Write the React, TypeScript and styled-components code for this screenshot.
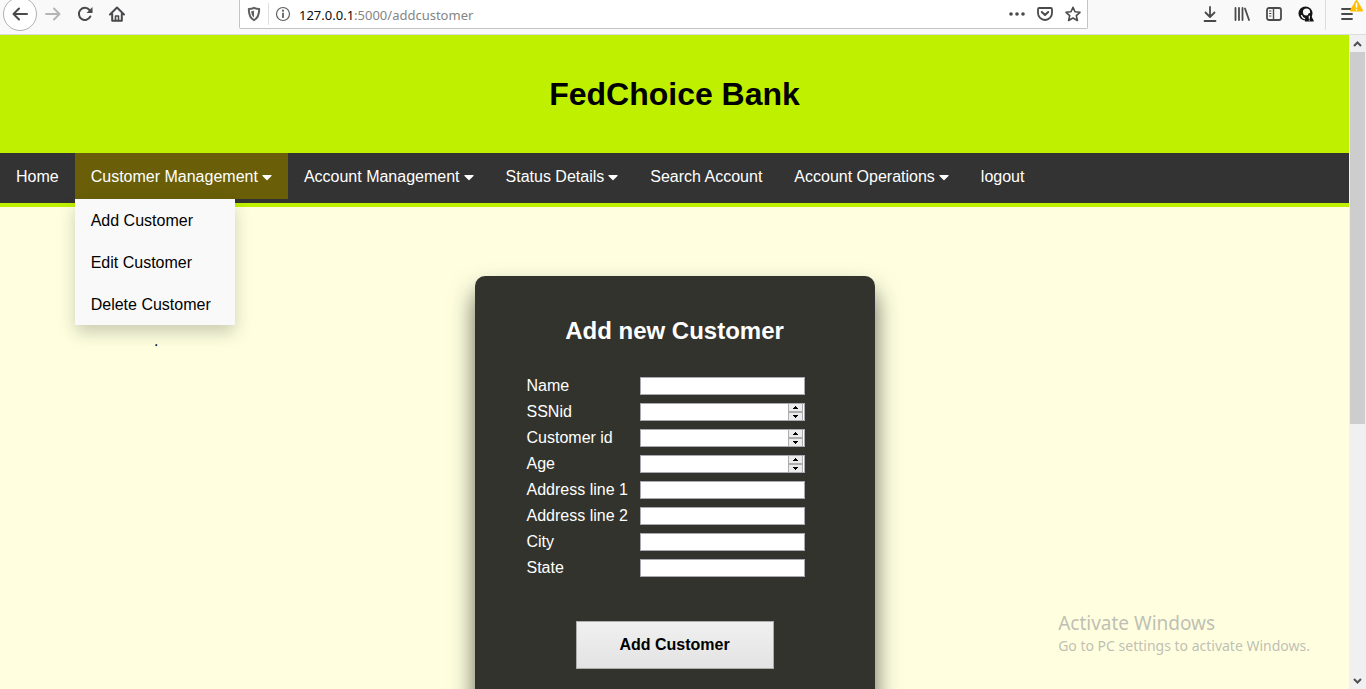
import React from "react";
import styled, { createGlobalStyle } from "styled-components";
import { FaCaretDown } from "react-icons/fa";

const GlobalStyle = createGlobalStyle`
  *, *::before, *::after { box-sizing: border-box; }
  html, body { margin: 0; padding: 0; }
  body { font-family: "Liberation Sans", Arial, sans-serif; font-size: 16px; line-height: 18px; }
  button, input { font: inherit; margin: 0; padding: 0; border-radius: 0; }
`;

const Browser = styled.div`
  display: flex;
  flex-direction: column;
  height: 100vh;
  overflow: hidden;
`;

const Toolbar = styled.header`
  flex: none;
  display: flex;
  align-items: flex-start;
  height: 35px;
  background: #f9f9fa;
  border-bottom: 1px solid #dcdcdc;
`;

const ToolGroup = styled.div<{ $side: "left" | "right" }>`
  flex: none;
  display: flex;
  align-items: center;
  gap: 16px;
  height: 28px;
  width: ${(p) => (p.$side === "left" ? "239px" : "278px")};
  padding: ${(p) => (p.$side === "left" ? "0 0 0 3px" : "0 10px 0 0")};
  justify-content: ${(p) => (p.$side === "left" ? "flex-start" : "flex-end")};
`;

const ToolButton = styled.button<{ $round?: boolean; $dim?: boolean }>`
  position: relative;
  flex: none;
  display: flex;
  align-items: center;
  justify-content: center;
  width: ${(p) => (p.$round ? "34px" : "16px")};
  height: ${(p) => (p.$round ? "34px" : "16px")};
  margin-right: ${(p) => (p.$round ? "-8px" : "0")};
  border: ${(p) => (p.$round ? "1px solid #b1b1b3" : "0")};
  border-radius: ${(p) => (p.$round ? "50%" : "0")};
  background: ${(p) => (p.$round ? "#fff" : "transparent")};
  color: ${(p) => (p.$dim ? "#b5b5b6" : "#4a4a4c")};
`;

const ToolDivider = styled.span`
  width: 1px;
  height: 32px;
  margin: 0 -2px 0 -5px;
  background: #dcdcdd;
`;

const UpdateBadge = styled.svg`
  position: absolute;
  top: -7px;
  left: 10px;
`;

const AddressBar = styled.div`
  flex: 1;
  min-width: 0;
  display: flex;
  align-items: center;
  gap: 12px;
  height: 29px;
  padding: 0 6px;
  background: #fff;
  border: 1px solid #c4c4c4;
  border-top: 0;
  border-radius: 0 0 2px 2px;
`;

const SiteIdentity = styled.div`
  display: flex;
  align-items: center;
  gap: 6px;
  color: #606062;
`;

const IdentityDivider = styled.span`
  width: 1px;
  height: 22px;
  background: #dfdfdf;
`;

const Url = styled.div`
  flex: 1;
  margin-left: -4px;
  padding-top: 2px;
  font-family: "Noto Sans", "Open Sans", sans-serif;
  font-size: 13px;
  color: #858585;
`;

const UrlHost = styled.span`
  color: #0c0c0d;
`;

const Viewport = styled.div`
  flex: 1;
  min-height: 0;
  display: flex;
`;

const Page = styled.div`
  position: relative;
  flex: 1;
  min-width: 0;
  overflow: hidden;
  background: #ffffe0;
`;

const Banner = styled.div`
  padding: 40px;
  background: #bff000;
  text-align: center;
`;

const BankName = styled.h1`
  margin: 0;
  font-size: 32px;
  line-height: 38px;
  color: #000;
`;

const NavBar = styled.nav`
  display: flex;
  height: 54px;
  background: #333;
  border-bottom: 4px solid #bff000;
`;

const NavEntry = styled.div`
  position: relative;
`;

const NavLink = styled.a`
  display: block;
  padding: 15px 16px 13px;
  color: #fff;
  text-decoration: none;
  white-space: nowrap;
`;

const NavToggle = styled.button<{ $open?: boolean }>`
  display: flex;
  align-items: center;
  gap: 4px;
  height: 46px;
  padding: 2px 16px 0;
  border: 0;
  background: ${(p) => (p.$open ? "#6a5f08" : "transparent")};
  color: #fff;
  white-space: nowrap;
`;

const Menu = styled.div`
  position: absolute;
  top: 46px;
  left: 0;
  z-index: 1;
  min-width: 160px;
  background: #f9f9f9;
  box-shadow: 0 8px 16px rgba(0, 0, 0, 0.2);
`;

const MenuLink = styled.a`
  display: block;
  padding: 13px 16px 11px;
  color: #000;
  text-decoration: none;
`;

const Content = styled.main`
  display: grid;
  grid-template-columns: 1fr 400px 1fr;
  align-items: start;
`;

const SideNote = styled.p`
  margin: 0;
  padding: 125px 0 0 154px;
  color: #000;
`;

const Card = styled.form`
  margin-top: 69px;
  padding: 40px;
  background: #33332d;
  border-radius: 10px;
  box-shadow: 0 15px 25px rgba(0, 0, 0, 0.6);
  color: #fff;
  text-align: center;
`;

const CardTitle = styled.h2`
  margin: 0 0 28px;
  font-size: 24px;
  line-height: 30px;
`;

const Fields = styled.div`
  display: grid;
  grid-template-columns: 113px 165px;
  padding-left: 12px;
`;

const FieldLabel = styled.label`
  height: 26px;
  line-height: 24px;
  text-align: left;
`;

const FieldBox = styled.div`
  display: flex;
  height: 18px;
  margin-top: 3px;
  background: #fff;
  border: 1px solid #a9a9b1;
`;

const FieldInput = styled.input`
  flex: 1;
  min-width: 0;
  height: 16px;
  border: 0;
  outline: 0;
  background: transparent;
  font-size: 13px;
  appearance: textfield;
  &::-webkit-inner-spin-button, &::-webkit-outer-spin-button { appearance: none; margin: 0; }
`;

const Stepper = styled.div`
  display: flex;
  flex-direction: column;
  justify-content: space-between;
  width: 15px;
  border: solid #adadad;
  border-width: 0 1px;
  margin-right: 1px;
  background: #adadad;
`;

const StepButton = styled.button`
  display: flex;
  align-items: center;
  justify-content: center;
  height: 7px;
  border: 0;
  background: #ececec;
`;

const SubmitButton = styled.button`
  width: 198px;
  height: 48px;
  margin-top: 39px;
  border: 1px solid #adadad;
  background: linear-gradient(#f0f0f0, #e3e3e3);
  color: #000;
  font-weight: bold;
`;

const Watermark = styled.div`
  position: absolute;
  right: 39px;
  bottom: 33px;
  font-family: "Noto Sans", "Open Sans", sans-serif;
  color: #bfbfb4;
  pointer-events: none;
`;

const WatermarkTitle = styled.div`
  font-size: 19px;
  line-height: 26px;
`;

const WatermarkText = styled.div`
  font-size: 14px;
  line-height: 20px;
`;

const ScrollBar = styled.div`
  flex: none;
  display: flex;
  flex-direction: column;
  width: 17px;
  padding: 0 1px;
  background: #f0f0f0;
`;

const ScrollArrow = styled.button`
  display: flex;
  align-items: center;
  justify-content: center;
  height: 17px;
  border: 0;
  background: transparent;
  color: #505050;
`;

const ScrollTrack = styled.div`
  flex: 1;
`;

const ScrollThumb = styled.div`
  height: 60%;
  background: #cdcdcd;
`;

const Icon = ({ children }: { children: React.ReactNode }) => (
  <svg
    width="16"
    height="16"
    viewBox="0 0 16 16"
    fill="none"
    stroke="currentColor"
    strokeWidth="2"
    strokeLinecap="round"
    strokeLinejoin="round"
    aria-hidden="true"
  >
    {children}
  </svg>
);

const customerLinks = ["Add Customer", "Edit Customer", "Delete Customer"];

const navItems: { label: string; menu?: boolean; items?: string[] }[] = [
  { label: "Home" },
  { label: "Customer Management", menu: true, items: customerLinks },
  { label: "Account Management", menu: true },
  { label: "Status Details", menu: true },
  { label: "Search Account" },
  { label: "Account Operations", menu: true },
  { label: "logout" },
];

const fields = [
  { id: "name", label: "Name" },
  { id: "ssn", label: "SSNid", numeric: true },
  { id: "customer", label: "Customer id", numeric: true },
  { id: "age", label: "Age", numeric: true },
  { id: "address1", label: "Address line 1" },
  { id: "address2", label: "Address line 2" },
  { id: "city", label: "City" },
  { id: "state", label: "State" },
];

function BrowserToolbar() {
  return (
    <Toolbar>
      <ToolGroup $side="left">
        <ToolButton $round aria-label="Back">
          <Icon><path d="M15 8H1.500M7 2.500 1.500 8 7 13.500" /></Icon>
        </ToolButton>
        <ToolButton $dim aria-label="Forward">
          <Icon><path d="M1 8h13.500M9 2.500 14.500 8 9 13.500" /></Icon>
        </ToolButton>
        <ToolButton aria-label="Reload">
          <Icon>
            <path d="M13.300 10.500A6 6 0 1 1 12.500 4" />
            <path d="M15.500 1v6h-6z" fill="currentColor" stroke="none" />
          </Icon>
        </ToolButton>
        <ToolButton aria-label="Home">
          <Icon>
            <path d="M1 8.500 8 1.500l7 7M3.200 8v6.800h9.600V8" />
            <path d="M6.500 14.500V10h3v4.500" strokeWidth="1.600" />
          </Icon>
        </ToolButton>
      </ToolGroup>

      <AddressBar>
        <SiteIdentity>
          <Icon>
            <path d="M8 1.800c1.700.9 3.600 1.200 5.200 1.200 0 4.500-.4 8.700-5.200 11.200C3.200 11.700 2.800 7.500 2.800 3 4.400 3 6.300 2.700 8 1.800z" />
            <path d="M8 4.500v7C5.900 9.800 5.300 7.800 5.200 5.200 6.200 5.100 7.200 4.900 8 4.500z" fill="currentColor" stroke="none" />
          </Icon>
          <IdentityDivider />
          <Icon>
            <circle cx="8" cy="8" r="6.500" strokeWidth="1.200" />
            <path d="M8 7.500v3.700" strokeWidth="1.800" />
            <circle cx="8" cy="4.700" r="1.100" fill="currentColor" stroke="none" />
          </Icon>
        </SiteIdentity>
        <Url role="textbox" aria-label="Address">
          <UrlHost>127.0.0.1</UrlHost>:5000/addcustomer
        </Url>
        <ToolButton aria-label="Page actions">
          <Icon>
            <g fill="currentColor" stroke="none">
              <circle cx="2" cy="8" r="1.800" />
              <circle cx="8" cy="8" r="1.800" />
              <circle cx="14" cy="8" r="1.800" />
            </g>
          </Icon>
        </ToolButton>
        <ToolButton aria-label="Save to Pocket">
          <Icon>
            <path d="M2.200 2h11.600q1.200 0 1.200 1.200V7A7 7 0 0 1 1 7V3.200Q1 2 2.200 2z" strokeWidth="1.800" />
            <path d="m4.800 6 3.200 3 3.200-3" />
          </Icon>
        </ToolButton>
        <ToolButton aria-label="Bookmark">
          <Icon>
            <path d="m8 1.300 2 4.500 5 .5-3.700 3.300 1.100 4.900L8 12l-4.400 2.500 1.100-4.900L1 6.300l5-.5z" strokeWidth="1.600" />
          </Icon>
        </ToolButton>
      </AddressBar>

      <ToolGroup $side="right">
        <ToolButton aria-label="Downloads">
          <Icon><path d="M8 1v9.500M3.500 6.500 8 11l4.500-4.500M2.500 15h11" strokeWidth="1.800" /></Icon>
        </ToolButton>
        <ToolButton aria-label="Library">
          <Icon><path d="M1.500 2v12M5 2v12M8.500 2v12M11 2.500l4 11.500" strokeWidth="1.800" /></Icon>
        </ToolButton>
        <ToolButton aria-label="Sidebars">
          <Icon>
            <rect x="1" y="2" width="14" height="12" rx="2" strokeWidth="1.800" />
            <path d="M7.500 2v12" strokeWidth="1.400" />
            <path d="M3.500 5h1.500M3.500 7.500h1.500M3.500 10h1.500" strokeWidth="1" />
          </Icon>
        </ToolButton>
        <ToolButton aria-label="Account">
          <Icon>
            <circle cx="7.500" cy="7.500" r="7" fill="#151515" stroke="none" />
            <circle cx="8.500" cy="6" r="3.600" fill="#f9f9fa" stroke="none" />
            <path d="M3.500 9.500q.8 2.600 3 3.200" stroke="#f9f9fa" strokeWidth="1.300" />
            <path d="M11.300 7.600 15.200 15H7.400z" fill="#111" stroke="#111" strokeWidth="1.200" />
            <path d="M11.300 10v2.200M11.300 14v.1" stroke="#fff" strokeWidth="1.200" />
          </Icon>
        </ToolButton>
        <ToolDivider />
        <ToolButton aria-label="Open menu">
          <Icon><path d="M2 3h10M2 8h10M2 13h10" strokeWidth="1.800" /></Icon>
          <UpdateBadge width="13" height="14" viewBox="0 0 13 14" aria-hidden="true">
            <path d="M6.500 2 12 11.500H1z" fill="#ffbf00" stroke="#ffbf00" strokeWidth="2" strokeLinejoin="round" />
            <path d="M6.500 4.500v3.500M6.500 10.500v.2" stroke="#fff" strokeWidth="1.600" strokeLinecap="round" />
          </UpdateBadge>
        </ToolButton>
      </ToolGroup>
    </Toolbar>
  );
}

function Navigation() {
  return (
    <NavBar>
      {navItems.map(({ label, menu, items }) => (
        <NavEntry key={label}>
          {menu ? (
            <NavToggle type="button" $open={!!items} aria-expanded={!!items}>
              {label}
              <FaCaretDown width={10} style={{ width: 10, height: 16 }} />
            </NavToggle>
          ) : (
            <NavLink href="#">{label}</NavLink>
          )}
          {items && (
            <Menu>
              {items.map((item) => (
                <MenuLink href="#" key={item}>{item}</MenuLink>
              ))}
            </Menu>
          )}
        </NavEntry>
      ))}
    </NavBar>
  );
}

function CustomerForm() {
  return (
    <Card onSubmit={(e) => e.preventDefault()}>
      <CardTitle>Add new Customer</CardTitle>
      <Fields>
        {fields.map(({ id, label, numeric }) => (
          <React.Fragment key={id}>
            <FieldLabel htmlFor={id}>{label}</FieldLabel>
            <FieldBox>
              <FieldInput id={id} type={numeric ? "number" : "text"} />
              {numeric && (
                <Stepper>
                  <StepButton type="button" aria-label={`Increase ${label}`}>
                    <svg width="5" height="3" viewBox="0 0 5 3"><path d="M0 3h5V2H4V1H3V0H2v1H1v1H0z" /></svg>
                  </StepButton>
                  <StepButton type="button" aria-label={`Decrease ${label}`}>
                    <svg width="5" height="3" viewBox="0 0 5 3"><path d="M0 0h5v1H4v1H3v1H2V2H1V1H0z" /></svg>
                  </StepButton>
                </Stepper>
              )}
            </FieldBox>
          </React.Fragment>
        ))}
      </Fields>
      <SubmitButton type="submit">Add Customer</SubmitButton>
    </Card>
  );
}

export default function App() {
  return (
    <Browser>
      <GlobalStyle />
      <BrowserToolbar />
      <Viewport>
        <Page>
          <Banner>
            <BankName>FedChoice Bank</BankName>
          </Banner>
          <Navigation />
          <Content>
            <SideNote>.</SideNote>
            <CustomerForm />
          </Content>
          <Watermark>
            <WatermarkTitle>Activate Windows</WatermarkTitle>
            <WatermarkText>Go to PC settings to activate Windows.</WatermarkText>
          </Watermark>
        </Page>
        <ScrollBar>
          <ScrollArrow aria-label="Scroll up">
            <svg width="9" height="6" viewBox="0 0 9 6" fill="none" stroke="currentColor" strokeWidth="2"><path d="M1 5l3.500-3.500L8 5" /></svg>
          </ScrollArrow>
          <ScrollTrack>
            <ScrollThumb />
          </ScrollTrack>
          <ScrollArrow aria-label="Scroll down">
            <svg width="9" height="6" viewBox="0 0 9 6" fill="none" stroke="currentColor" strokeWidth="2"><path d="M1 1l3.500 3.500L8 1" /></svg>
          </ScrollArrow>
        </ScrollBar>
      </Viewport>
    </Browser>
  );
}
